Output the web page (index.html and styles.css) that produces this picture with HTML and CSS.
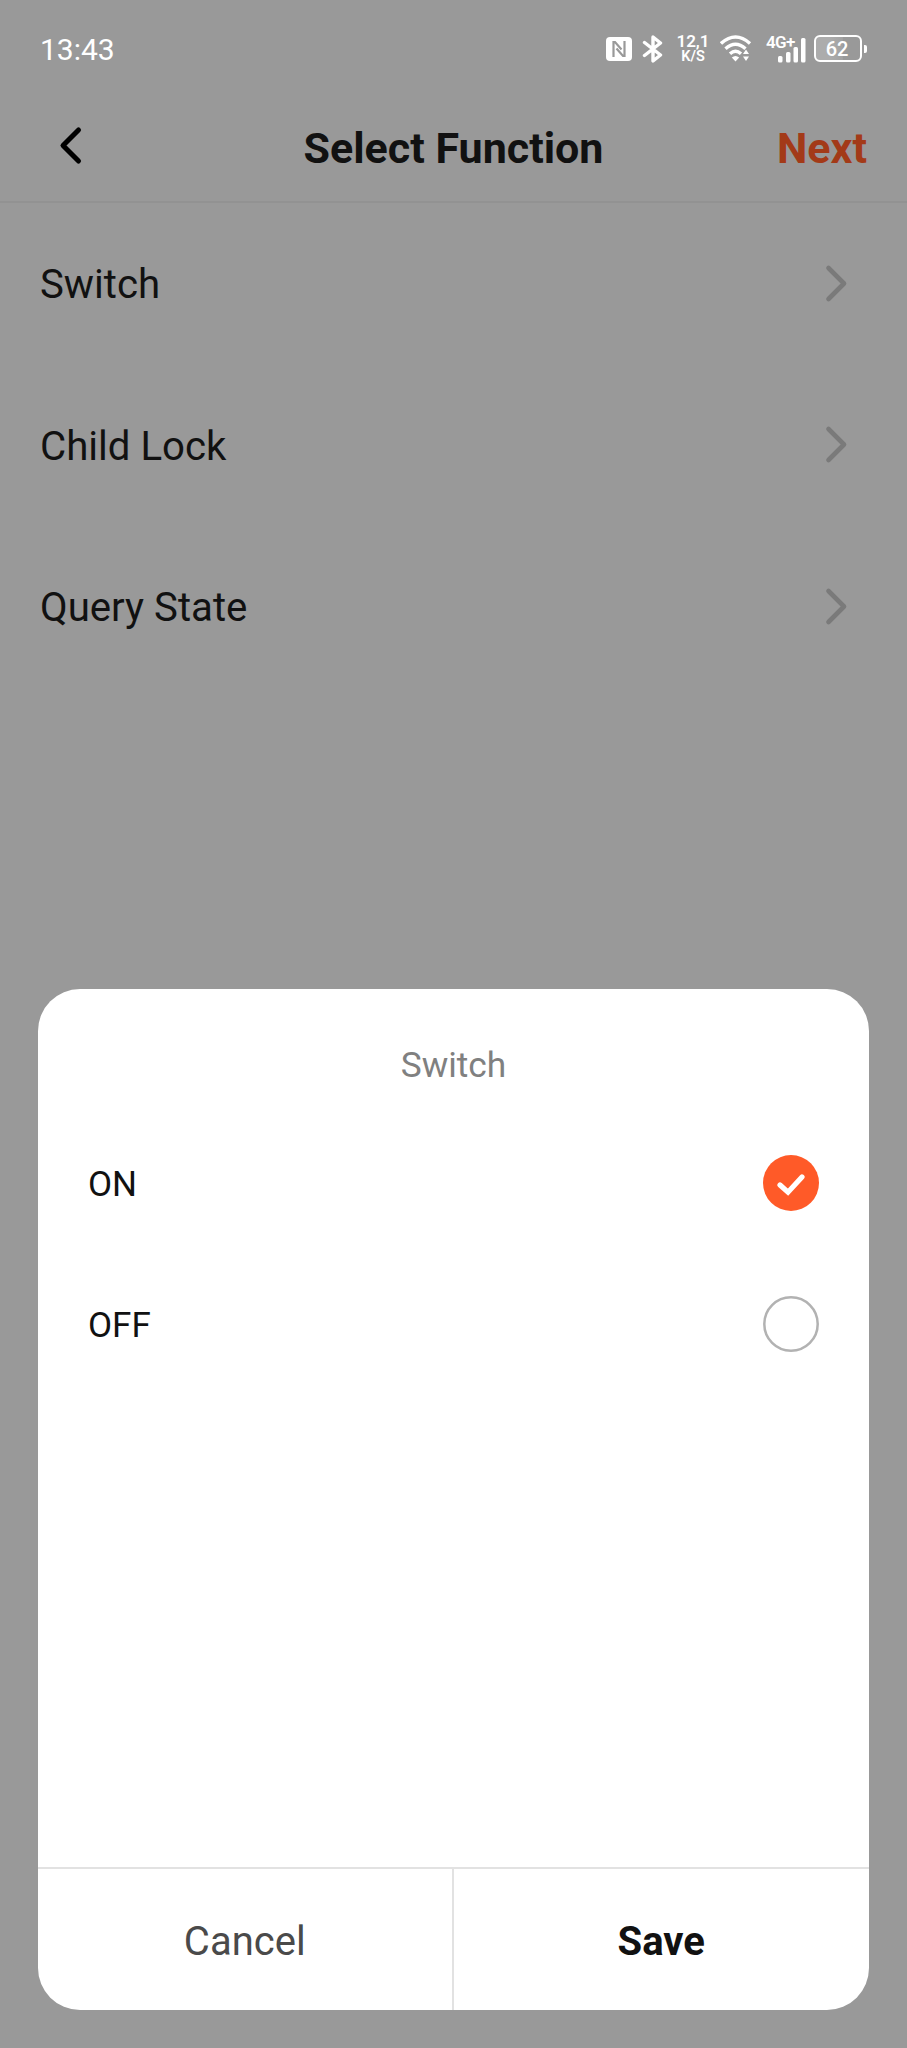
FILE: index.html
```html
<!DOCTYPE html>
<html lang="en">
<head>
<meta charset="utf-8">
<title>Select Function</title>
<link rel="stylesheet" href="styles.css">
</head>
<body>
<div class="screen">
  <div class="status">
    <span class="time">13:43</span>
    <div class="status-icons">
      <svg class="nfc" width="26" height="24" viewBox="0 0 26 24"><rect width="26" height="24" rx="4" fill="#fff"/><path d="M7.500 20V5h1.500L15.500 12.500M18.500 4v15H17L10.500 11.500" fill="none" stroke="#999" stroke-width="2.200"/></svg>
      <svg class="bt" width="22" height="28" viewBox="0 0 22 28"><path d="M2.500 7.500 18.500 20 11 26V2L18.500 8 2.500 20.500" fill="none" stroke="#fff" stroke-width="3.400" stroke-linejoin="round" stroke-linecap="round"/></svg>
      <div class="speed"><span class="rate">12,1</span><span class="unit">K/S</span></div>
      <svg class="wifi" width="32" height="27" viewBox="0 0 32 27"><g fill="none" stroke="#fff" stroke-width="3.400"><path d="M1 8.500Q15.500-4.500 30 8.500"/><path d="M5.500 13.700Q15.500 4.700 25.500 13.700"/><path d="M10 18.700Q15.500 13.700 21 18.700"/></g><path d="M11.800 22.500Q15.500 19.500 19.200 22.500L15.500 26.500ZM23 19 26 14.500l3 4.500ZM23 21.500h6L26 26Z" fill="#fff"/></svg>
      <div class="cell"><span class="net">4G+</span>
        <svg class="bars" width="28" height="25" viewBox="0 0 28 25"><g fill="#fff"><rect x="0" y="18" width="4.500" height="6.500" rx="1.500"/><rect x="8" y="14" width="4.500" height="10.500" rx="1.500"/><rect x="15.500" y="9" width="4.500" height="15.500" rx="1.500"/><rect x="23" y="0" width="4.500" height="24.500" rx="1.500"/></g></svg>
      </div>
      <div class="battery"><span class="level">62</span></div><i class="nub"></i>
    </div>
  </div>
  <header class="header">
    <svg class="back" width="26" height="40" viewBox="0 0 26 40"><path d="M20.500 5 5 20.500 20.500 36" fill="none" stroke="#000" stroke-width="5" stroke-linecap="round" stroke-linejoin="round"/></svg>
    <h1 class="title">Select Function</h1>
    <span class="next">Next</span>
  </header>
  <ul class="list">
    <li class="row"><span>Switch</span><svg class="chev" width="24" height="40" viewBox="0 0 24 40"><path d="M3.500 4 19 19.500 3.500 35" fill="none" stroke="#7a7a7a" stroke-width="4.600" stroke-linecap="round" stroke-linejoin="round"/></svg></li>
    <li class="row"><span>Child Lock</span><svg class="chev" width="24" height="40" viewBox="0 0 24 40"><path d="M3.500 4 19 19.500 3.500 35" fill="none" stroke="#7a7a7a" stroke-width="4.600" stroke-linecap="round" stroke-linejoin="round"/></svg></li>
    <li class="row"><span>Query State</span><svg class="chev" width="24" height="40" viewBox="0 0 24 40"><path d="M3.500 4 19 19.500 3.500 35" fill="none" stroke="#7a7a7a" stroke-width="4.600" stroke-linecap="round" stroke-linejoin="round"/></svg></li>
  </ul>
  <section class="sheet">
    <h2 class="sheet-title">Switch</h2>
    <div class="option"><span>ON</span><svg width="56" height="56" viewBox="0 0 56 56"><circle cx="28" cy="28" r="28" fill="#ff5a28"/><path d="M17 30 25 37.200 39 22" fill="none" stroke="#fff" stroke-width="5.200" stroke-linecap="round"/></svg></div>
    <div class="option"><span>OFF</span><svg width="56" height="56" viewBox="0 0 56 56"><circle cx="28" cy="28" r="26.700" fill="#fff" stroke="#b2b2b2" stroke-width="2.500"/></svg></div>
    <footer class="actions"><span class="cancel">Cancel</span><span class="save">Save</span></footer>
  </section>
</div>
</body>
</html>
```
FILE: styles.css
```css
* { box-sizing: border-box; }
body { margin: 0; background: #999; font-family: Roboto, "Liberation Sans", sans-serif; color: #111; }
.screen { width: 907px; height: 2048px; display: flex; flex-direction: column; background: #999; overflow: hidden; }
.status { height: 97px; padding: 0 40px 0 40px; display: flex; justify-content: space-between; color: #fff; }
.time { font-size: 30px; line-height: 36px; margin-top: 32px; }
.status-icons { display: flex; align-items: flex-start; padding-top: 35px; }
.nfc { margin: 2px 10px 0 0; }
.bt { margin-right: 14px; }
.speed { width: 30px; display: flex; flex-direction: column; align-items: center; font-weight: 600; margin: -2px 12px 0 0; }
.rate { font-size: 17px; line-height: 16px; white-space: nowrap; }
.unit { font-size: 14.5px; line-height: 14px; margin-top: 1px; }
.wifi { margin: 0 14px 0 0; }
.cell { width: 40px; height: 27px; position: relative; margin-right: 8px; }
.net { position: absolute; left: 0; top: -1px; font-size: 17px; line-height: 17px; font-weight: 600; letter-spacing: -0.7px; }
.bars { position: absolute; right: 0; top: 3px; }
.battery { width: 48px; height: 27px; border: 2px solid #fff; border-radius: 6px; display: flex; justify-content: center; background: linear-gradient(90deg, #acacac 30%, #a2a2a2 60%, #999 62%); }
.level { font-size: 20px; line-height: 24px; font-weight: 500; margin-right: 2px; }
.nub { width: 3px; height: 8px; margin: 10px 0 0 2px; background: #fff; border-radius: 0 2px 2px 0; }
.header { height: 106px; display: grid; grid-template-columns: 1fr auto 1fr; align-items: center; padding: 0 40px 0 58px; border-bottom: 2px solid #929292; }
.back { display: block; margin-bottom: 8px; }
.title { margin: 0 0 2px -18px; font-size: 43px; line-height: 50px; font-weight: 700; }
.next { justify-self: end; margin-bottom: 2px; font-size: 43px; line-height: 50px; font-weight: 700; color: #a33a18; }
.list { margin: 0; padding: 0; list-style: none; }
.row { height: 161.5px; padding: 0 58px 0 40px; display: flex; align-items: center; justify-content: space-between; font-size: 40.2px; }
.row span { padding-top: 2px; }
.sheet { width: 831px; height: 1021px; margin: auto auto 38px 38px; background: #fff; border-radius: 42px; display: flex; flex-direction: column; overflow: hidden; }
.sheet-title { margin: 54px 0 41px; font-size: 35.3px; line-height: 44px; font-weight: 400; color: #808080; text-align: center; }
.option { height: 141px; flex: none; margin-top: -16px; margin-bottom: 16px; padding: 0 50px; display: flex; align-items: center; justify-content: space-between; font-size: 35px; }
.option span { padding-top: 3px; }
.actions { height: 143px; margin-top: auto; border-top: 2px solid #e2e2e2; display: grid; grid-template-columns: 1fr 1fr; font-size: 40px; }
.cancel, .save { display: flex; align-items: center; justify-content: center; padding-top: 3px; }
.cancel { color: #4a4a4a; border-right: 2px solid #e2e2e2; }
.save { font-weight: 700; }
```
